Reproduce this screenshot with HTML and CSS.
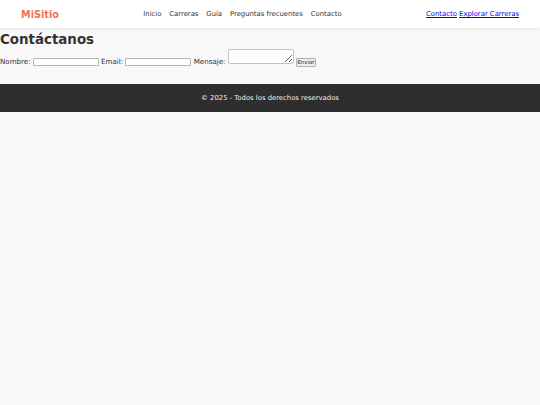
FILE: index.html
```html
<!DOCTYPE html>
<html lang="es">
<head>
<meta charset="utf-8">
<title>MiSitio - Contacto</title>
<link rel="stylesheet" href="styles.css">
</head>
<body>
<header class="site-header">
  <div class="logo">MiSitio</div>
  <nav class="main-nav">
    <a href="#">Inicio</a>
    <a href="#">Carreras</a>
    <a href="#">Guía</a>
    <a href="#">Preguntas frecuentes</a>
    <a href="#">Contacto</a>
  </nav>
  <div class="header-links"><a href="#">Contacto</a> <a href="#">Explorar Carreras</a></div>
</header>
<main class="content">
  <h1 class="title">Contáctanos</h1>
  <form class="contact-form">
    <label>Nombre: <input type="text"></label>
    <label>Email: <input type="email"></label>
    <label>Mensaje: <textarea></textarea></label>
    <button type="submit">Enviar</button>
  </form>
</main>
<footer class="site-footer">© 2025 - Todos los derechos reservados</footer>
</body>
</html>
```

FILE: styles.css
```css
html, body {
  margin: 0;
  padding: 0;
}
body {
  background: #f8f8f8;
  font-family: "DejaVu Sans", Verdana, sans-serif;
  font-size: 6.85px;
  color: #333;
}
.site-header {
  display: flex;
  justify-content: space-between;
  align-items: center;
  height: 28px;
  padding: 0 21px;
  background: #fff;
  box-shadow: 0 1px 4px rgba(0,0,0,0.08);
}
.logo {
  font-size: 9.7px;
  font-weight: bold;
  color: #ef7350;
}
.main-nav {
  display: flex;
  gap: 7.9px;
}
.main-nav a {
  color: #333;
  text-decoration: none;
}
.header-links a {
  color: #0000ee;
}
.title {
  margin: 3.5px 0 2.5px;
  font-size: 13.4px;
  font-weight: bold;
  color: #333;
}
.contact-form {
  margin: 0 0 17px;
  font-size: 7.1px;
}
.contact-form label {
  color: #333;
}
.contact-form input {
  box-sizing: border-box;
  width: 66px;
  height: 8px;
  margin: 0;
  padding: 0 1px;
  font-size: 6px;
  border: 1px solid #b4b4b4;
  border-radius: 1px;
  background: #fff;
}
.contact-form textarea {
  box-sizing: border-box;
  width: 66px;
  height: 15px;
  margin: 0;
  padding: 1px;
  font-size: 6px;
  border: 1px solid #c4c4c4;
  border-radius: 2px;
  background: #fff;
}
.contact-form button {
  box-sizing: border-box;
  height: 8.5px;
  width: 20px;
  margin: 0;
  padding: 0;
  font-size: 5.4px;
  line-height: 1;
  font-family: "DejaVu Sans", sans-serif;
  color: #222;
  border: 1px solid #b0b0b0;
  border-radius: 1px;
  background: #efefef;
}
.site-footer {
  background: #2e2e2e;
  color: #eee;
  text-align: center;
  height: 28px;
  line-height: 28px;
}
```
